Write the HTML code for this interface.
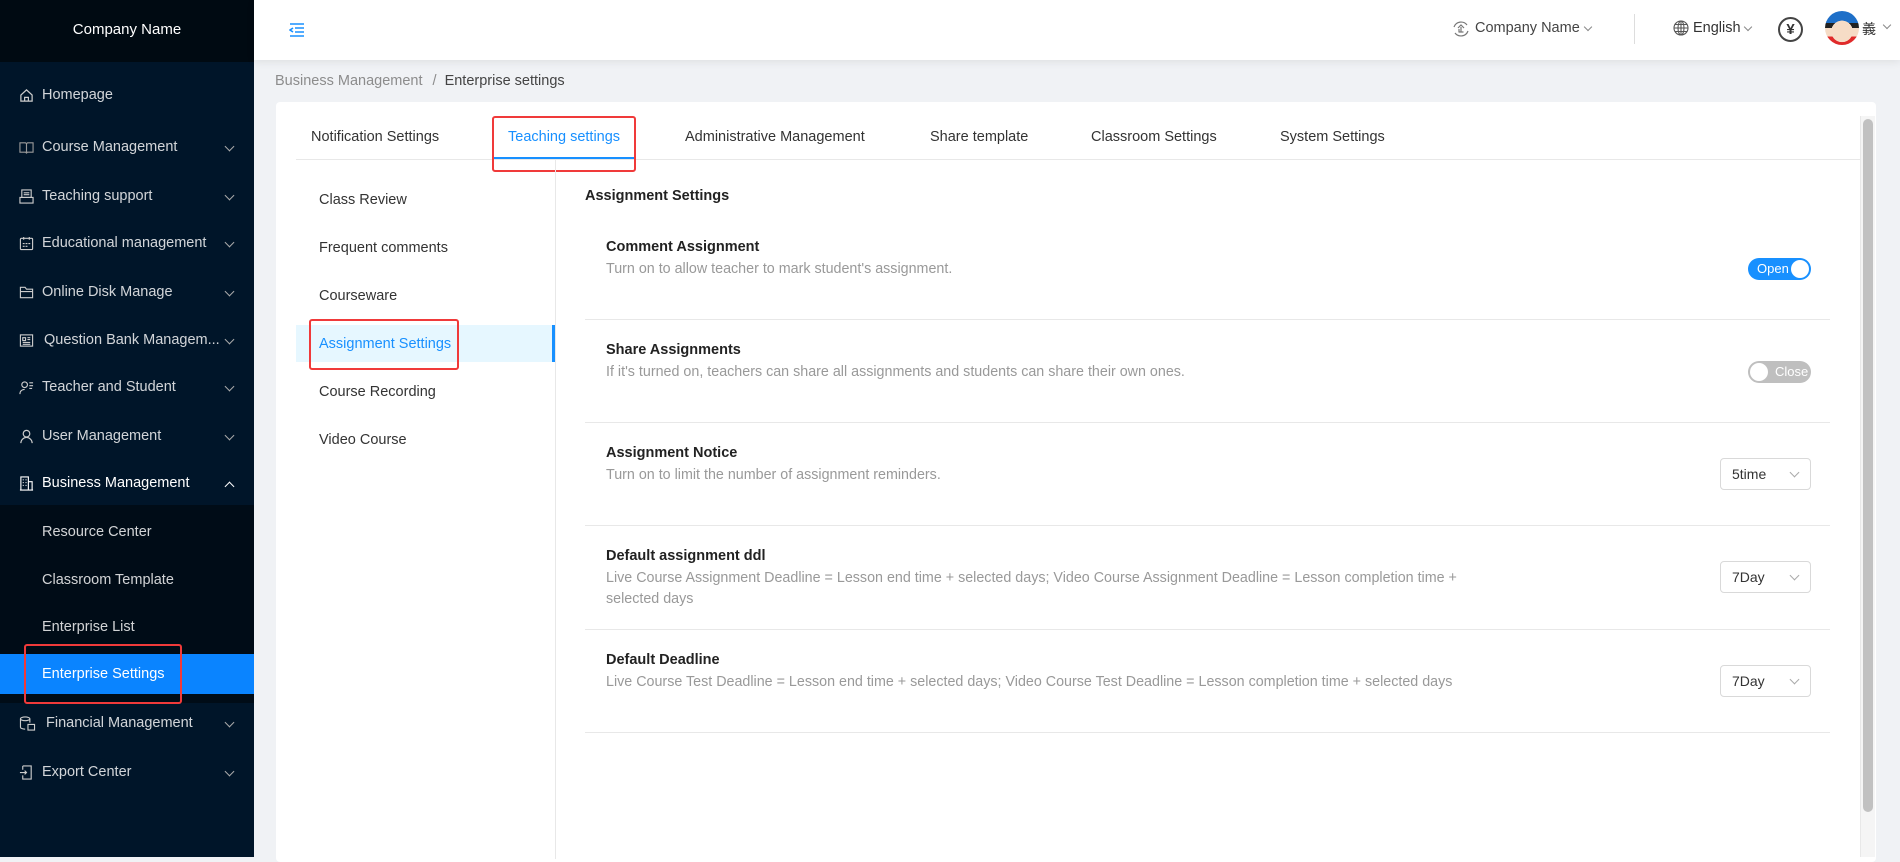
<!DOCTYPE html>
<html><head><meta charset="utf-8"><style>
*{box-sizing:border-box;margin:0;padding:0}
body{width:1900px;height:857px;overflow:hidden;background:#f0f2f5;font-family:"Liberation Sans","Noto Sans CJK SC",sans-serif;position:relative;font-size:15px}
.abs{position:absolute}
#side{left:0;top:0;width:254px;height:857px;background:#001529}
#logo{left:0;top:0;width:254px;height:62px;background:#000a12;color:#fff;font-size:15px;text-align:center;line-height:60px}
.mi{position:absolute;left:0;width:254px;height:48px;color:rgba(255,255,255,.82);line-height:48px;font-size:14.5px}
.mi .t{position:absolute;left:42px}
.mi svg.ic{position:absolute;left:19px;top:17px}
.mi .ch{position:absolute;left:226px;top:20px;width:7px;height:7px;border-right:1.5px solid #aaa;border-bottom:1.5px solid #aaa;transform:rotate(45deg)}
#sub{left:0;top:505px;width:254px;height:198px;background:#000c17}
#header{left:254px;top:0;width:1646px;height:60px;background:#fff;box-shadow:0 2px 8px rgba(0,0,0,.08)}
#card{left:276px;top:102px;width:1600px;height:760px;background:#fff;border-radius:4px}
.tab{position:absolute;top:129px;font-size:14.5px;color:#333}
.ln{position:absolute;height:1px;background:#e8e8e8}
.nav{position:absolute;left:319px;font-size:14.5px;color:#333}
.rt{position:absolute;left:606px;font-size:14.5px;font-weight:bold;color:#222}
.rd{position:absolute;left:606px;font-size:14.3px;color:#999;line-height:21px;width:880px}
.sel{position:absolute;left:1720px;width:91px;height:32px;border:1px solid #d9d9d9;border-radius:4px;font-size:14px;color:#333;line-height:30px;padding-left:11px}
.sel:after{content:"";position:absolute;right:12px;top:10px;width:6px;height:6px;border-right:1px solid #aaa;border-bottom:1px solid #aaa;transform:rotate(45deg)}
.red{position:absolute;border:2px solid #f03a3a;border-radius:3px}
</style></head><body>
<div id="side" class="abs"></div>
<div id="logo" class="abs">Company Name</div>
<div id="sub" class="abs"></div>
<div class="abs" style="left:0;top:654px;width:254px;height:40px;background:#0a84ff"></div>

<div class="mi" style="top:71px"><svg class="ic" width="15" height="15" viewBox="0 0 16 16" fill="none" stroke="#ccc" stroke-width="1.3"><path d="M2 7.5L8 2l6 5.5V14H2z M6 14v-4h4v4"/></svg><span class="t">Homepage</span></div>
<div class="mi" style="top:123px"><svg class="ic" width="15" height="15" viewBox="0 0 16 16" fill="none" stroke="#999" stroke-width="1.2"><path d="M1 3h6l1 1 1-1h6v10H9l-1 1-1-1H1z M8 4v10"/></svg><span class="t">Course Management</span><span class="ch"></span></div>
<div class="mi" style="top:172px"><svg class="ic" width="15" height="15" viewBox="0 0 16 16" fill="none" stroke="#ccc" stroke-width="1.2"><rect x="3" y="1" width="10" height="8"/><rect x="1" y="9" width="14" height="6"/><path d="M5 4h6M5 6h6"/></svg><span class="t">Teaching support</span><span class="ch"></span></div>
<div class="mi" style="top:219px"><svg class="ic" width="15" height="15" viewBox="0 0 16 16" fill="none" stroke="#ccc" stroke-width="1.2"><rect x="1.5" y="2.5" width="13" height="12" rx="1"/><path d="M5 1v3M11 1v3M4 8h2M7 8h2M10 8h2M4 11h2M7 11h2"/></svg><span class="t">Educational management</span><span class="ch"></span></div>
<div class="mi" style="top:268px"><svg class="ic" width="15" height="15" viewBox="0 0 16 16" fill="none" stroke="#ccc" stroke-width="1.2"><path d="M1.5 2.5h5l1.5 2h6.5v9h-13z M1.5 7h13"/></svg><span class="t">Online Disk Manage</span><span class="ch"></span></div>
<div class="mi" style="top:316px"><svg class="ic" width="15" height="15" viewBox="0 0 16 16" fill="none" stroke="#ccc" stroke-width="1.2"><rect x="1.5" y="2" width="13" height="12"/><path d="M4 5h3v3H4zM9 5h3M9 7h3M4 10h8M4 12h8"/></svg><span class="t" style="left:44px">Question Bank Managem...</span><span class="ch"></span></div>
<div class="mi" style="top:363px"><svg class="ic" width="15" height="15" viewBox="0 0 16 16" fill="none" stroke="#ccc" stroke-width="1.2"><circle cx="6" cy="5" r="3"/><path d="M1 15c0-3 2-5 5-5M11 3h4M11 6h4M11 9h3"/></svg><span class="t">Teacher and Student</span><span class="ch"></span></div>
<div class="mi" style="top:412px"><svg class="ic" width="15" height="15" viewBox="0 0 16 16" fill="none" stroke="#ccc" stroke-width="1.3"><circle cx="8" cy="5" r="3.5"/><path d="M2 15c0-3.5 3-6 6-6s6 2.5 6 6"/></svg><span class="t">User Management</span><span class="ch"></span></div>
<div class="mi" style="top:459px;color:#fff"><svg class="ic" width="15" height="15" viewBox="0 0 16 16" fill="none" stroke="#fff" stroke-width="1.2"><path d="M2 15V1h8v14M10 6h4v9M1 15h14M4 4h1M7 4h1M4 7h1M7 7h1M4 10h1M7 10h1"/></svg><span class="t">Business Management</span><span class="ch" style="transform:rotate(225deg);top:24px;border-color:#fff"></span></div>
<div class="mi" style="top:508px"><span class="t">Resource Center</span></div>
<div class="mi" style="top:556px"><span class="t">Classroom Template</span></div>
<div class="mi" style="top:603px"><span class="t">Enterprise List</span></div>
<div class="mi" style="top:650px;color:#fff"><span class="t">Enterprise Settings</span></div>
<div class="mi" style="top:699px"><svg class="ic" width="17" height="15" viewBox="0 0 17 16" fill="none" stroke="#ccc" stroke-width="1.2"><ellipse cx="6" cy="3" rx="5" ry="2"/><path d="M1 3v9c0 1 2 2 5 2M11 3v4"/><rect x="9" y="9" width="7" height="6"/></svg><span class="t" style="left:46px">Financial Management</span><span class="ch"></span></div>
<div class="mi" style="top:748px"><svg class="ic" width="15" height="15" viewBox="0 0 16 16" fill="none" stroke="#ccc" stroke-width="1.2"><path d="M4 1h9v14H4v-4M4 5V1M1 8h7M6 6l2 2-2 2"/></svg><span class="t">Export Center</span><span class="ch"></span></div>
<div class="red" style="left:24px;top:644px;width:158px;height:60px"></div>

<div id="header" class="abs"></div>
<svg class="abs" style="left:289px;top:23px" width="16" height="14" viewBox="0 0 16 14" fill="none" stroke="#1890ff" stroke-width="1.6"><path d="M1 1h14M6 5h9M6 9h9M1 13h14M4 5L1 7l3 2"/></svg>
<svg class="abs" style="left:1452px;top:20px" width="18" height="18" viewBox="0 0 18 18" fill="none" stroke="#777" stroke-width="1.2"><path d="M15 5A7.5 7.5 0 0 0 2 7M3 13a7.5 7.5 0 0 0 13-2"/><path d="M6 8l3-3 3 3M9 7v5M6.5 12h5M7 9v3"/></svg>
<div class="abs" style="left:1475px;top:20px;font-size:14.5px;color:#444">Company Name</div>
<div class="abs" style="left:1585px;top:24px;width:6px;height:6px;border-right:1px solid #888;border-bottom:1px solid #888;transform:rotate(45deg)"></div>
<div class="abs" style="left:1634px;top:14px;width:1px;height:30px;background:#ddd"></div>
<svg class="abs" style="left:1673px;top:20px" width="16" height="16" viewBox="0 0 16 16" fill="none" stroke="#555" stroke-width="1.1"><circle cx="8" cy="8" r="7"/><ellipse cx="8" cy="8" rx="3" ry="7"/><path d="M1 8h14M2 4.5h12M2 11.5h12M8 1v14"/></svg>
<div class="abs" style="left:1693px;top:20px;font-size:14.5px;color:#333">English</div>
<div class="abs" style="left:1745px;top:24px;width:6px;height:6px;border-right:1px solid #888;border-bottom:1px solid #888;transform:rotate(45deg)"></div>
<div class="abs" style="left:1778px;top:17px;width:25px;height:25px;border:2px solid #444;border-radius:50%;text-align:center;line-height:21px;font-size:15px;font-weight:bold;color:#333">¥</div>
<div class="abs" style="left:1825px;top:11px;width:34px;height:34px;border-radius:50%;background:radial-gradient(circle at 50% 60%,#f6dcc6 0 40%,transparent 41%),linear-gradient(#1e6fc8 0 35%,#222 35% 50%,#f6dcc6 50% 75%,#e02a2a 75%)"></div>
<div class="abs" style="left:1862px;top:19px;font-size:14px;color:#333;font-family:'Noto Sans CJK SC',sans-serif">義</div>
<div class="abs" style="left:1884px;top:22px;width:6px;height:6px;border-right:1px solid #888;border-bottom:1px solid #888;transform:rotate(45deg)"></div>

<div class="abs" style="left:275px;top:73px;font-size:14.5px;color:#8c8c8c">Business Management <span style="margin:0 8px 0 6px">/</span><span style="color:#444">Enterprise settings</span></div>

<div id="card" class="abs"></div>
<div class="tab" style="left:311px">Notification Settings</div>
<div class="tab" style="left:508px;color:#1890ff">Teaching settings</div>
<div class="tab" style="left:685px">Administrative Management</div>
<div class="tab" style="left:930px">Share template</div>
<div class="tab" style="left:1091px">Classroom Settings</div>
<div class="tab" style="left:1280px">System Settings</div>
<div class="ln" style="left:296px;top:159px;width:1564px"></div>
<div class="abs" style="left:494px;top:157px;width:140px;height:2px;background:#1890ff"></div>
<div class="red" style="left:492px;top:116px;width:144px;height:56px"></div>

<div class="abs" style="left:555px;top:159px;width:1px;height:700px;background:#e8e8e8"></div>
<div class="nav" style="top:192px">Class Review</div>
<div class="nav" style="top:240px">Frequent comments</div>
<div class="nav" style="top:288px">Courseware</div>
<div class="abs" style="left:296px;top:325px;width:259px;height:37px;background:#e6f7ff;border-right:3px solid #1890ff"></div>
<div class="nav" style="top:336px;color:#1890ff">Assignment Settings</div>
<div class="nav" style="top:384px">Course Recording</div>
<div class="nav" style="top:432px">Video Course</div>
<div class="red" style="left:309px;top:319px;width:150px;height:51px"></div>

<div class="abs" style="left:585px;top:188px;font-size:14.5px;font-weight:bold;color:#222">Assignment Settings</div>

<div class="rt" style="top:239px">Comment Assignment</div>
<div class="rd" style="top:259px">Turn on to allow teacher to mark student's assignment.</div>
<div class="abs" style="left:1748px;top:258px;width:63px;height:22px;border-radius:11px;background:#1890ff;color:#fff;font-size:13px;line-height:22px;padding-left:9px">Open<div class="abs" style="right:2px;top:2px;width:18px;height:18px;border-radius:50%;background:#fff"></div></div>
<div class="ln" style="left:585px;top:319px;width:1245px"></div>

<div class="rt" style="top:342px">Share Assignments</div>
<div class="rd" style="top:362px">If it's turned on, teachers can share all assignments and students can share their own ones.</div>
<div class="abs" style="left:1748px;top:361px;width:63px;height:22px;border-radius:11px;background:#bfbfbf;color:#fff;font-size:13px;line-height:22px;padding-left:27px">Close<div class="abs" style="left:2px;top:2px;width:18px;height:18px;border-radius:50%;background:#fff"></div></div>
<div class="ln" style="left:585px;top:422px;width:1245px"></div>

<div class="rt" style="top:445px">Assignment Notice</div>
<div class="rd" style="top:465px">Turn on to limit the number of assignment reminders.</div>
<div class="sel" style="top:458px">5time</div>
<div class="ln" style="left:585px;top:525px;width:1245px"></div>

<div class="rt" style="top:548px">Default assignment ddl</div>
<div class="rd" style="top:568px;width:870px">Live Course Assignment Deadline = Lesson end time + selected days; Video Course Assignment Deadline = Lesson completion time + selected days</div>
<div class="sel" style="top:561px">7Day</div>
<div class="ln" style="left:585px;top:629px;width:1245px"></div>

<div class="rt" style="top:652px">Default Deadline</div>
<div class="rd" style="top:672px;width:960px">Live Course Test Deadline = Lesson end time + selected days; Video Course Test Deadline = Lesson completion time + selected days</div>
<div class="sel" style="top:665px">7Day</div>
<div class="ln" style="left:585px;top:732px;width:1245px"></div>

<div class="abs" style="left:1860px;top:116px;width:15px;height:741px;background:#f5f5f5;border-left:1px solid #e8e8e8"></div>
<div class="abs" style="left:1863px;top:119px;width:10px;height:693px;border-radius:5px;background:#c1c1c1"></div>
</body></html>
